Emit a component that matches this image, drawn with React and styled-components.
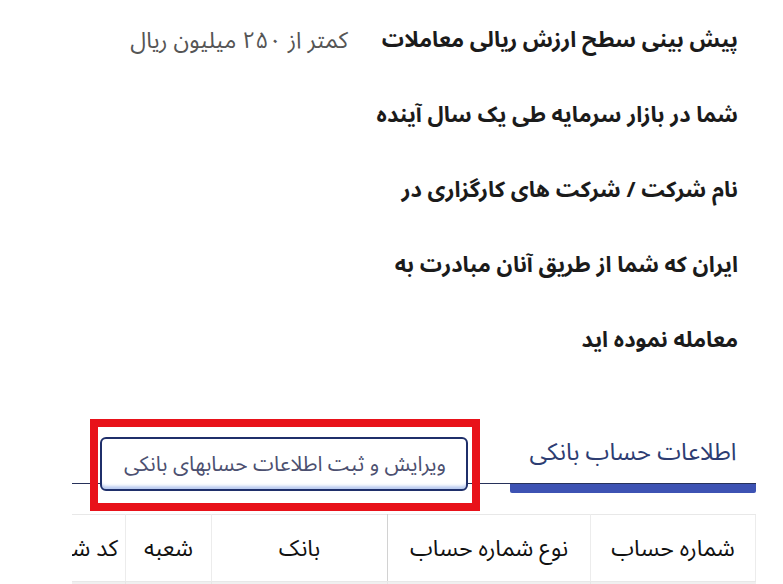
import React from 'react';
import styled, { createGlobalStyle } from 'styled-components';

const GlobalStyle = createGlobalStyle`
  html, body {
    margin: 0;
    padding: 0;
    background: #ffffff;
  }
  body {
    font-family: "Noto Sans Arabic", "DejaVu Sans", "Noto Sans", sans-serif;
  }
`;

const Page = styled.div`
  direction: rtl;
  width: 783px;
  height: 584px;
  overflow: hidden;
  padding-top: 3px;
  box-sizing: border-box;
`;

const Form = styled.div`
  padding-right: 45px;
`;

const Field = styled.div`
  display: grid;
  grid-template-columns: 360px auto;
  column-gap: 30px;
  align-items: start;
`;

const Label = styled.div`
  font-size: 22px;
  font-weight: 700;
  color: #1b1b1b;
  line-height: 75px;
  white-space: nowrap;
`;

const Value = styled.div`
  font-size: 23px;
  color: #555555;
  line-height: 75px;
  white-space: nowrap;
`;

const TabList = styled.div`
  display: flex;
  align-items: flex-start;
  gap: 42px;
  height: 62px;
  margin: 43px 27px 0 72px;
  border-bottom: 1.5px solid #27315a;
`;

const ActiveTab = styled.div`
  position: relative;
  width: 246px;
  height: 62px;
  display: flex;
  align-items: center;
  justify-content: center;
  font-size: 24px;
  color: #2d3d72;

  &::after {
    content: '';
    position: absolute;
    right: 0;
    left: 0;
    bottom: -10px;
    height: 9px;
    background: #3d52b3;
    border-radius: 0 0 2px 2px;
  }
`;

const TabButtonWrap = styled.div`
  position: relative;
  margin-top: 16px;
`;

const TabButton = styled.button`
  direction: rtl;
  width: 368px;
  height: 54px;
  box-sizing: border-box;
  border: 2px solid #1f2f6a;
  border-radius: 6px;
  background: #ffffff;
  box-shadow: inset 0 -6px 3px -3px rgba(130, 160, 225, 0.55);
  font-family: inherit;
  font-size: 21px;
  color: #4c5070;
  text-align: right;
  white-space: nowrap;
  padding: 0 20px 0 6px;
  cursor: pointer;
`;

const RedFrame = styled.div`
  position: absolute;
  top: -18px;
  right: -12px;
  bottom: -20px;
  left: -10px;
  border: 8px solid #e8121a;
  pointer-events: none;
`;

const TableClip = styled.div`
  margin: 30px 27px 0 72px;
  overflow: hidden;
  height: 100px;
`;

const Table = styled.table`
  border-collapse: collapse;
  table-layout: fixed;
  width: 717px;
`;

const HeadCell = styled.th`
  width: ${(p) => p.$w}px;
  height: 66px;
  padding: 0 ${(p) => p.$shift || 0}px 0 0;
  font-weight: 400;
  font-size: 23px;
  color: #111111;
  text-align: center;
  white-space: nowrap;
  border-top: 1px solid #e8e8e8;
  border-bottom: 1px solid #e8e8e8;
  border-left: 1px solid ${(p) => p.$line || '#ececec'};
  border-right: 1px solid #ececec;
`;

const BodyCell = styled.td`
  height: 30px;
  background: #f0f0f0;
  border-left: 1px solid #e6e6e6;
`;

const columns = [
  { title: 'شماره حساب', w: 164, shift: 0 },
  { title: 'نوع شماره حساب', w: 202, line: '#d2d2d2' },
  { title: 'بانک', w: 175 },
  { title: 'شعبه', w: 85 },
  { title: 'کد شعبه', w: 91 },
];

export default function App() {
  return (
    <Page>
      <GlobalStyle />
      <Form>
        <Field>
          <Label>
            پیش بینی سطح ارزش ریالی معاملات
            <br />
            شما در بازار سرمایه طی یک سال آینده
          </Label>
          <Value>کمتر از ۲۵۰ میلیون ریال</Value>
        </Field>
        <Field>
          <Label>
            نام شرکت / شرکت های کارگزاری در
            <br />
            ایران که شما از طریق آنان مبادرت به
            <br />
            معامله نموده اید
          </Label>
          <Value />
        </Field>
      </Form>

      <TabList>
        <ActiveTab>اطلاعات حساب بانکی</ActiveTab>
        <TabButtonWrap>
          <TabButton>ویرایش و ثبت اطلاعات حسابهای بانکی</TabButton>
          <RedFrame />
        </TabButtonWrap>
      </TabList>

      <TableClip>
        <Table>
          <thead>
            <tr>
              {columns.map((c) => (
                <HeadCell key={c.title} $w={c.w} $line={c.line} $shift={c.shift}>
                  {c.title}
                </HeadCell>
              ))}
            </tr>
          </thead>
          <tbody>
            <tr>
              {columns.map((c) => (
                <BodyCell key={c.title} />
              ))}
            </tr>
          </tbody>
        </Table>
      </TableClip>
    </Page>
  );
}
